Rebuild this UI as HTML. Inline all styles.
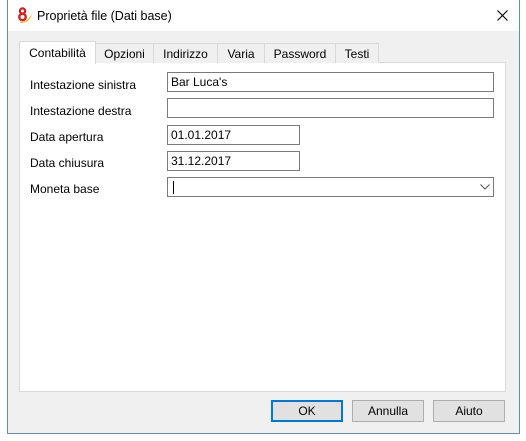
<!DOCTYPE html>
<html><head><style>
body{margin:0;width:526px;height:441px;background:#fff;font-family:"Liberation Sans",sans-serif;font-size:12px;color:#000;position:relative;overflow:hidden}
.win{position:absolute;left:7px;top:0;width:511px;height:433px;border:1px solid #5d8fb8;border-top:none;background:#f0f0f0}
.title{position:absolute;left:0;top:0;width:511px;height:31px;background:#fff}
.a{position:absolute}
.panel{position:absolute;left:19px;top:62px;width:485px;height:328px;background:#fff;border:1px solid #d9d9d9}
.tab{position:absolute;top:43px;height:19px;border:1px solid #d9d9d9;border-bottom:none;background:#f0f0f0;text-align:center;line-height:21px}
.in{position:absolute;border:1px solid #7a7a7a;background:#fff;line-height:19px;padding-left:3px;box-sizing:border-box;height:20px}
.lbl{position:absolute;left:30px}
.btn{position:absolute;top:400px;width:72px;height:22px;box-sizing:border-box;border:1px solid #adadad;background:#e1e1e1;text-align:center;line-height:20px}
</style></head><body>
<div class="win"><div class="title"></div></div>
<svg class="a" style="left:15px;top:6px" width="19" height="19" viewBox="0 0 19 19"><path d="M2 14 Q9 20 17 8 Q15 17 6 17Z" fill="#f2c21a"/><circle cx="7.5" cy="5" r="2.6" fill="none" stroke="#d42020" stroke-width="2.2"/><circle cx="7.5" cy="11" r="3.2" fill="none" stroke="#d42020" stroke-width="2.4"/></svg>
<div class="a" style="left:37px;top:9px;font-size:12.5px">Proprietà file (Dati base)</div>
<svg class="a" style="left:497px;top:10px" width="11" height="11"><path d="M0.5 0.5L10.5 10.5M10.5 0.5L0.5 10.5" stroke="#000" stroke-width="1.1"/></svg>
<div class="panel"></div>
<div class="tab" style="left:95px;width:57px">Opzioni</div>
<div class="tab" style="left:153px;width:63px">Indirizzo</div>
<div class="tab" style="left:217px;width:46px">Varia</div>
<div class="tab" style="left:264px;width:70px">Password</div>
<div class="tab" style="left:335px;width:42px">Testi</div>
<div class="tab" style="left:19px;top:41px;width:75px;height:22px;background:#fff;line-height:22px">Contabilità</div>
<div class="lbl" style="top:78px">Intestazione sinistra</div>
<div class="lbl" style="top:104px">Intestazione destra</div>
<div class="lbl" style="top:130px">Data apertura</div>
<div class="lbl" style="top:156px">Data chiusura</div>
<div class="lbl" style="top:182px">Moneta base</div>
<div class="in" style="left:167px;top:72px;width:327px">Bar Luca's</div>
<div class="in" style="left:167px;top:98px;width:327px"></div>
<div class="in" style="left:167px;top:125px;width:133px">01.01.2017</div>
<div class="in" style="left:167px;top:151px;width:133px">31.12.2017</div>
<div class="in" style="left:167px;top:177px;width:327px"><span style="display:inline-block;width:1px;height:13px;background:#000;vertical-align:middle;margin-left:2px"></span></div>
<svg class="a" style="left:480px;top:184px" width="10" height="6"><path d="M0.5 0.5L5 5L9.5 0.5" stroke="#555" fill="none"/></svg>
<div class="btn" style="left:271px;border:2px solid #0078d7;line-height:18px">OK</div>
<div class="btn" style="left:352px">Annulla</div>
<div class="btn" style="left:433px">Aiuto</div>
</body></html>
